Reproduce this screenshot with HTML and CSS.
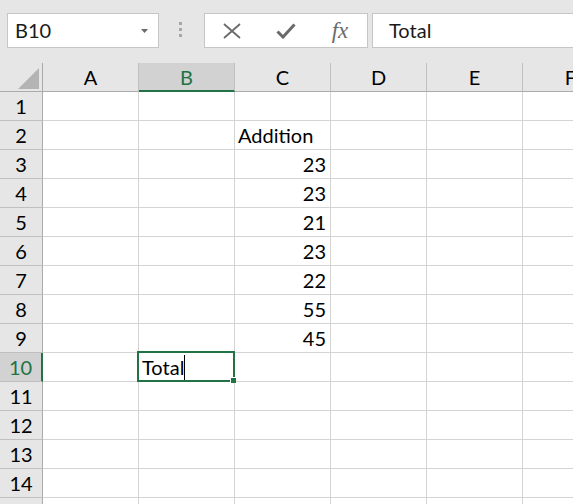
FILE: index.html
```html
<!DOCTYPE html>
<html>
<head>
<meta charset="utf-8">
<link rel="stylesheet" href="styles.css">
</head>
<body>
<div class="topbar">
  <div class="namebox">
    <span>B10</span>
    <svg class="arrow" width="7" height="4" viewBox="0 0 7 4"><path d="M0 0H7L3.5 4Z" fill="#6a6a6a"/></svg>
  </div>
  <div class="dots"><i></i><i></i><i></i></div>
  <div class="fbtns">
    <div class="btn"><svg width="18" height="16" viewBox="0 0 18 16"><path d="M1 1L17 15M17 1L1 15" stroke="#6a6a6a" stroke-width="1.8" fill="none"/></svg></div>
    <div class="btn"><svg width="20" height="16" viewBox="0 0 20 16"><path d="M1.5 8.5L7 14L18.5 1.5" stroke="#6a6a6a" stroke-width="3" fill="none"/></svg></div>
    <div class="btn fx">fx</div>
  </div>
  <div class="finput">Total</div>
</div>
<div class="sheet">
  <div class="corner"><div class="tri"></div></div><div class="h">A</div><div class="h sel">B</div><div class="h">C</div><div class="h">D</div><div class="h">E</div><div class="h">F</div>
  <div class="rh">1</div><div class="c"></div><div class="c"></div><div class="c"></div><div class="c"></div><div class="c"></div><div class="c"></div>
  <div class="rh">2</div><div class="c"></div><div class="c"></div><div class="c">Addition</div><div class="c"></div><div class="c"></div><div class="c"></div>
  <div class="rh">3</div><div class="c"></div><div class="c"></div><div class="c num">23</div><div class="c"></div><div class="c"></div><div class="c"></div>
  <div class="rh">4</div><div class="c"></div><div class="c"></div><div class="c num">23</div><div class="c"></div><div class="c"></div><div class="c"></div>
  <div class="rh">5</div><div class="c"></div><div class="c"></div><div class="c num">21</div><div class="c"></div><div class="c"></div><div class="c"></div>
  <div class="rh">6</div><div class="c"></div><div class="c"></div><div class="c num">23</div><div class="c"></div><div class="c"></div><div class="c"></div>
  <div class="rh">7</div><div class="c"></div><div class="c"></div><div class="c num">22</div><div class="c"></div><div class="c"></div><div class="c"></div>
  <div class="rh">8</div><div class="c"></div><div class="c"></div><div class="c num">55</div><div class="c"></div><div class="c"></div><div class="c"></div>
  <div class="rh">9</div><div class="c"></div><div class="c"></div><div class="c num">45</div><div class="c"></div><div class="c"></div><div class="c"></div>
  <div class="rh rsel">10</div><div class="c"></div><div class="c active-cell">Total<span class="caret"></span><div class="active"><div class="handle"></div></div></div><div class="c"></div><div class="c"></div><div class="c"></div><div class="c"></div>
  <div class="rh">11</div><div class="c"></div><div class="c"></div><div class="c"></div><div class="c"></div><div class="c"></div><div class="c"></div>
  <div class="rh">12</div><div class="c"></div><div class="c"></div><div class="c"></div><div class="c"></div><div class="c"></div><div class="c"></div>
  <div class="rh">13</div><div class="c"></div><div class="c"></div><div class="c"></div><div class="c"></div><div class="c"></div><div class="c"></div>
  <div class="rh">14</div><div class="c"></div><div class="c"></div><div class="c"></div><div class="c"></div><div class="c"></div><div class="c"></div>
  <div class="rh">15</div><div class="c"></div><div class="c"></div><div class="c"></div><div class="c"></div><div class="c"></div><div class="c"></div>
</div>
</body>
</html>
```
FILE: styles.css
```css
html, body {
  margin: 0;
  padding: 0;
}
body {
  width: 573px;
  height: 504px;
  overflow: hidden;
  background: #ffffff;
  font-family: Lato, "Liberation Sans", sans-serif;
  font-size: 20px;
  color: #000;
}
.topbar {
  height: 63px;
  box-sizing: border-box;
  padding-top: 13px;
  background: #e6e6e6;
  display: flex;
  align-items: flex-start;
}
.namebox {
  margin-left: 7px;
  width: 152px;
  height: 35px;
  box-sizing: border-box;
  border: 1px solid #c6c6c6;
  background: #fff;
  display: flex;
  align-items: center;
  justify-content: space-between;
  padding: 0 10px 0 7px;
  line-height: 33px;
  color: #1a1a1a;
}
.arrow {
  display: block;
}
.dots {
  width: 45px;
  height: 35px;
  box-sizing: border-box;
  padding: 9px 0 0 20px;
  display: flex;
  flex-direction: column;
  gap: 3px;
}
.dots i {
  display: block;
  width: 3px;
  height: 3px;
  background: #a6a6a6;
}
.fbtns {
  width: 164px;
  height: 35px;
  box-sizing: border-box;
  border: 1px solid #c6c6c6;
  background: #fff;
  display: flex;
}
.btn {
  width: 54px;
  height: 33px;
  display: flex;
  align-items: center;
  justify-content: center;
}
.btn svg {
  display: block;
}
.fx {
  font-family: "Liberation Serif", serif;
  font-style: italic;
  font-size: 23px;
  color: #6a6a6a;
  letter-spacing: 0;
}
.finput {
  flex: 1;
  margin-left: 4px;
  margin-right: -4px;
  height: 35px;
  box-sizing: border-box;
  border: 1px solid #c6c6c6;
  background: #fff;
  padding-left: 16px;
  line-height: 33px;
  color: #1a1a1a;
}
.sheet {
  display: grid;
  width: max-content;
  grid-template-columns: 43px repeat(6, 96px);
  grid-auto-rows: 29px;
}
.sheet > div {
  box-sizing: border-box;
  line-height: 28px;
  white-space: nowrap;
}
.corner {
  background: #e6e6e6;
  border-right: 1px solid #ababab;
  border-bottom: 1px solid #ababab;
  display: flex;
  justify-content: flex-end;
  align-items: flex-end;
  padding: 0 3px 2px 0;
}
.tri {
  width: 21px;
  height: 21px;
  background: #b4b4b4;
  clip-path: polygon(100% 0, 100% 100%, 0 100%);
}
.h {
  background: #e6e6e6;
  border-right: 1px solid #c0c0c0;
  border-bottom: 1px solid #ababab;
  text-align: center;
}
.h.sel {
  background: #d2d2d2;
  color: #217346;
  border-bottom: 2px solid #217346;
}
.rh {
  background: #e6e6e6;
  border-right: 1px solid #ababab;
  border-bottom: 1px solid #c0c0c0;
  text-align: center;
}
.rh.rsel {
  background: #d2d2d2;
  color: #217346;
  border-right: 2px solid #217346;
}
.c {
  border-right: 1px solid #d4d4d4;
  border-bottom: 1px solid #d4d4d4;
  padding: 0 3px;
}
.num {
  text-align: right;
  padding-right: 4px;
}
.active-cell {
  position: relative;
}
.caret {
  display: inline-block;
  width: 1px;
  height: 25px;
  background: #000;
  vertical-align: -5px;
}
.active {
  position: absolute;
  top: -2px;
  left: -2px;
  right: -1px;
  bottom: -1px;
  border: 2px solid #217346;
}
.handle {
  position: absolute;
  right: -3px;
  bottom: -3px;
  width: 5px;
  height: 5px;
  background: #217346;
  border-left: 1px solid #fff;
  border-top: 1px solid #fff;
}
```
